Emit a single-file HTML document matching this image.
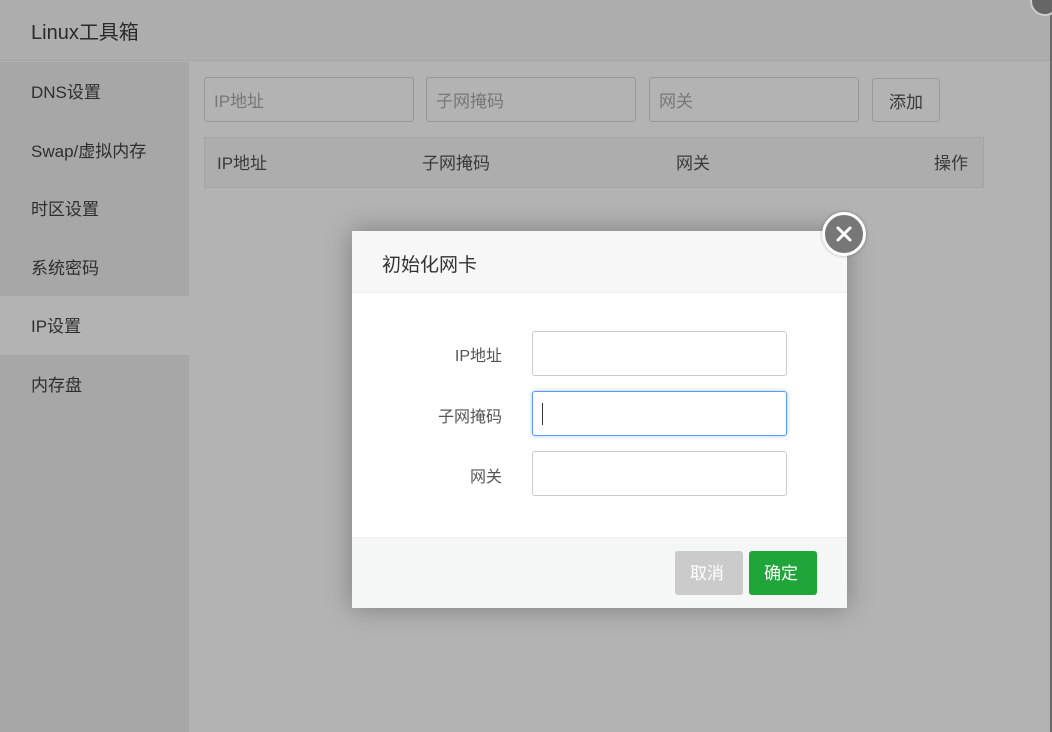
<!DOCTYPE html>
<html><head><meta charset="utf-8"><style>
*{box-sizing:border-box;margin:0;padding:0}
body{width:1052px;height:732px;overflow:hidden;background:#b3b3b3;font-family:"Liberation Sans","Noto Sans CJK SC",sans-serif;position:relative;color:#333}
.hdr{position:absolute;left:0;top:0;width:1050px;height:61px;background:#adadad;border-bottom:1px solid #a6a6a6;font-size:20px;padding:16px 0 0 31px;color:#2a2a2a}
.side{position:absolute;left:0;top:62px;width:189px;height:670px;background:#a7a7a7}
.side div{height:58.6px;line-height:61px;padding-left:31px;font-size:17px;color:#2e2e2e}
.side .act{background:#b3b3b3}
.in{position:absolute;top:77px;height:45px;width:210px;border:1px solid #989898;border-radius:3px;font-size:17px;color:#777;padding:9px 0 0 9px}
.btn{position:absolute;left:872px;top:78px;width:68px;height:44px;border:1px solid #999;border-radius:4px;font-size:17px;padding:9px 0 0 16px;color:#3a3a3a}
.th{position:absolute;left:204px;top:137px;width:780px;height:51px;border:1px solid #a3a3a3;background:#adadad;font-size:17px;color:#3a3a3a}
.th span{position:absolute;top:11px}
.rline{position:absolute;left:1050px;top:0;width:2px;height:732px;background:#6a6a6a}
.dlg{position:absolute;left:352px;top:231px;width:495px;height:377px;background:#fff;box-shadow:0 0 25px rgba(0,0,0,.3)}
.dh{height:62px;background:#f7f7f7;border-bottom:1px solid #eee;font-size:19px;padding:19px 0 0 30px;color:#333}
.lb{position:absolute;font-size:16px;color:#555;text-align:right;width:150px;left:0}
.fi{position:absolute;left:180px;width:255px;height:45px;border:1px solid #ccc;border-radius:3px;background:#fff}
.ft{position:absolute;left:0;top:306px;width:495px;height:71px;background:#f5f6f6;border-top:1px solid #eee}
.b{position:absolute;top:13px;height:44px;border-radius:3px;color:#fff;font-size:17px;padding:8px 0 0 15px;width:68px}
.cl{position:absolute;left:822px;top:212px;width:44px;height:44px;border-radius:50%;background:#777;border:3px solid #fff;box-shadow:0 0 3px rgba(0,0,0,.3)}
</style></head><body>
<div class="hdr">Linux工具箱</div>
<div class="side"><div>DNS设置</div><div>Swap/虚拟内存</div><div>时区设置</div><div>系统密码</div><div class="act">IP设置</div><div>内存盘</div></div>
<div class="in" style="left:204px">IP地址</div>
<div class="in" style="left:426px">子网掩码</div>
<div class="in" style="left:649px">网关</div>
<div class="btn">添加</div>
<div class="th"><span style="left:12px">IP地址</span><span style="left:217px">子网掩码</span><span style="left:471px">网关</span><span style="left:729px">操作</span></div>
<div class="rline"></div>
<div style="position:absolute;left:1030px;top:-14px;width:30px;height:30px;border-radius:50%;background:#666;border:2px solid #ccc"></div>
<div class="dlg">
<div class="dh">初始化网卡</div>
<div class="lb" style="top:111px">IP地址</div>
<div class="fi" style="top:100px"></div>
<div class="lb" style="top:172px">子网掩码</div>
<div class="fi" style="top:160px;border-color:#5b9cf0;box-shadow:0 0 4px rgba(80,150,240,.5)"><div style="position:absolute;left:9px;top:11px;width:1px;height:22px;background:#333"></div></div>
<div class="lb" style="top:232px">网关</div>
<div class="fi" style="top:220px"></div>
<div class="ft"><div class="b" style="left:323px;background:#cbcbcb">取消</div><div class="b" style="left:397px;background:#20a53a">确定</div></div>
</div>
<div class="cl"><svg width="38" height="38" viewBox="0 0 38 38" style="position:absolute;left:0;top:0"><path d="M13 13L25 25M25 13L13 25" stroke="#fff" stroke-width="3" stroke-linecap="round"/></svg></div>
</body></html>
